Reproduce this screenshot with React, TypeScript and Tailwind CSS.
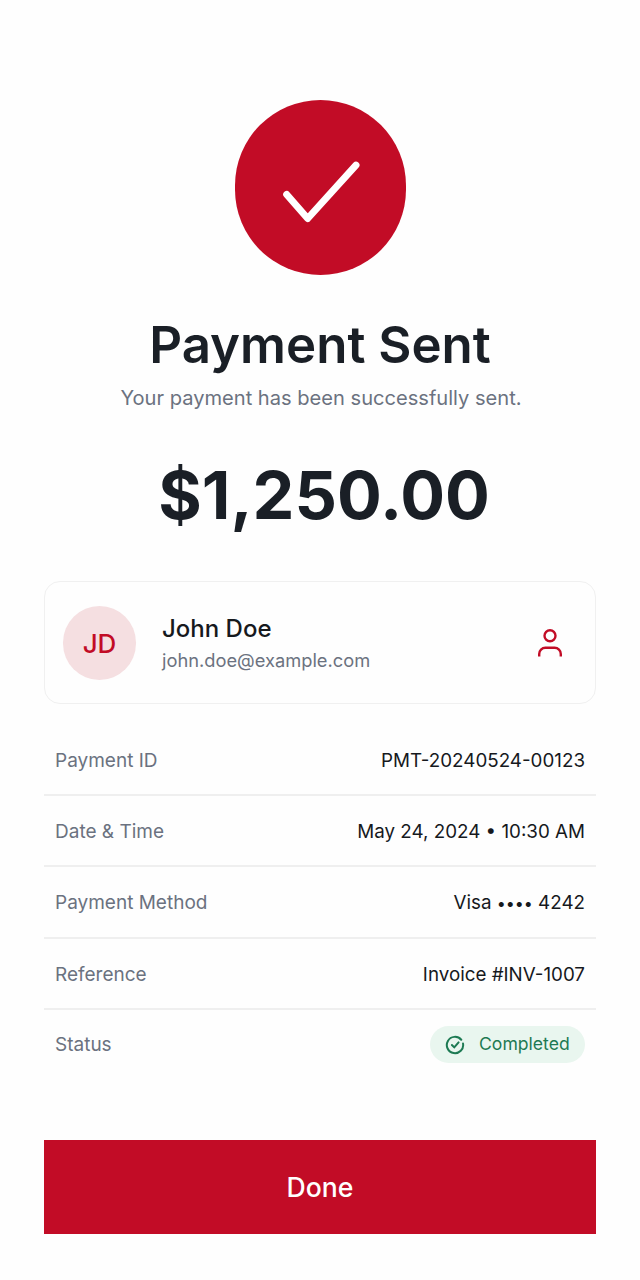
const rows = [
  { label: "Payment ID", value: "PMT-20240524-00123", height: "h-[71px]" },
  { label: "Date & Time", value: "May 24, 2024 • 10:30 AM", height: "h-[71px]" },
  {
    label: "Payment Method",
    value: (
      <>
        Visa <span className="text-[16px]">••••</span> 4242
      </>
    ),
    height: "h-[72px]",
  },
  { label: "Reference", value: "Invoice #INV-1007", height: "h-[71px]" },
];

export default function App() {
  return (
    <main className="flex h-[1280px] w-[640px] flex-col items-center bg-[#fefefe] px-11 pt-[100px] font-['Inter',sans-serif]">
      <div className="flex h-[175px] w-[171px] items-center justify-center rounded-full bg-[#c20c26]">
        <svg className="h-[100px] w-[100px]" viewBox="0 0 100 100" fill="none" stroke="#fff" strokeWidth="7" strokeLinecap="round" strokeLinejoin="round">
          <path d="M16.7 56.5 37.7 80.5 86 27.2" />
        </svg>
      </div>

      <h1 className="mt-[40px] text-[51px] leading-[60px] font-semibold text-[#1a1f26]">Payment Sent</h1>
      <p className="mt-[9px] pl-[2px] text-[20.1px] leading-7 text-[#6b7280]">Your payment has been successfully sent.</p>
      <p className="mt-[39px] pl-2 text-[66.5px] leading-[88px] font-bold text-[#1a1f26]">$1,250.00</p>

      <section className="mt-[42px] flex h-[123px] w-full items-center rounded-2xl border border-[#f0f0f0] pr-[31px] pl-[18px]">
        <div className="flex h-[74px] w-[73px] items-center justify-center rounded-full bg-[#f5dfe1] pt-[2px] text-[26px] font-medium text-[#c20c26]">
          JD
        </div>
        <div className="ml-[26px] flex-1">
          <p className="text-[24px] leading-8 font-medium text-[#16191d]">John Doe</p>
          <p className="mt-[3px] text-[18.3px] leading-6 text-[#6b7280]">john.doe@example.com</p>
        </div>
        <svg className="h-[32px] w-[28px]" viewBox="0 0 28 32" fill="none" stroke="#c20c26" strokeWidth="2.4">
          <circle cx="14" cy="8.7" r="5.5" />
          <path d="M3.2 29.5v-2.5a6.2 6.2 0 0 1 6.2-6.2h9.2a6.2 6.2 0 0 1 6.2 6.2v2.5" />
        </svg>
      </section>

      <section className="mt-[21px] w-full">
        {rows.map((row) => (
          <div key={row.label} className={`flex ${row.height} items-center justify-between border-b-2 border-[#efefef] px-[11px] pt-[3px] text-[19px]`}>
            <span className="text-[#6b7280]">{row.label}</span>
            <span className="text-[18.8px] text-[#16191d]">{row.value}</span>
          </div>
        ))}
        <div className="flex h-[69px] items-center justify-between px-[11px] text-[19px]">
          <span className="pt-[2px] text-[#6b7280]">Status</span>
          <span className="flex h-[37px] w-[155px] items-center gap-[14px] rounded-full bg-[#e9f6ef] pl-[15px] text-[17.6px] text-[#1d7a53]">
            <svg className="h-[20px] w-[20px]" viewBox="0 0 24 24" fill="none" stroke="currentColor" strokeWidth="2.4" strokeLinecap="round" strokeLinejoin="round">
              <path d="M19.5 5.7A9.8 9.8 0 1 0 21.65 10.3" />
              <path d="m8.3 12 2.8 2.9 5.2-6" />
            </svg>
            Completed
          </span>
        </div>
      </section>

      <button className="mt-[61px] h-[94px] w-full bg-[#c20c26] pt-[2px] text-[26.6px] font-medium text-white">Done</button>
    </main>
  );
}
